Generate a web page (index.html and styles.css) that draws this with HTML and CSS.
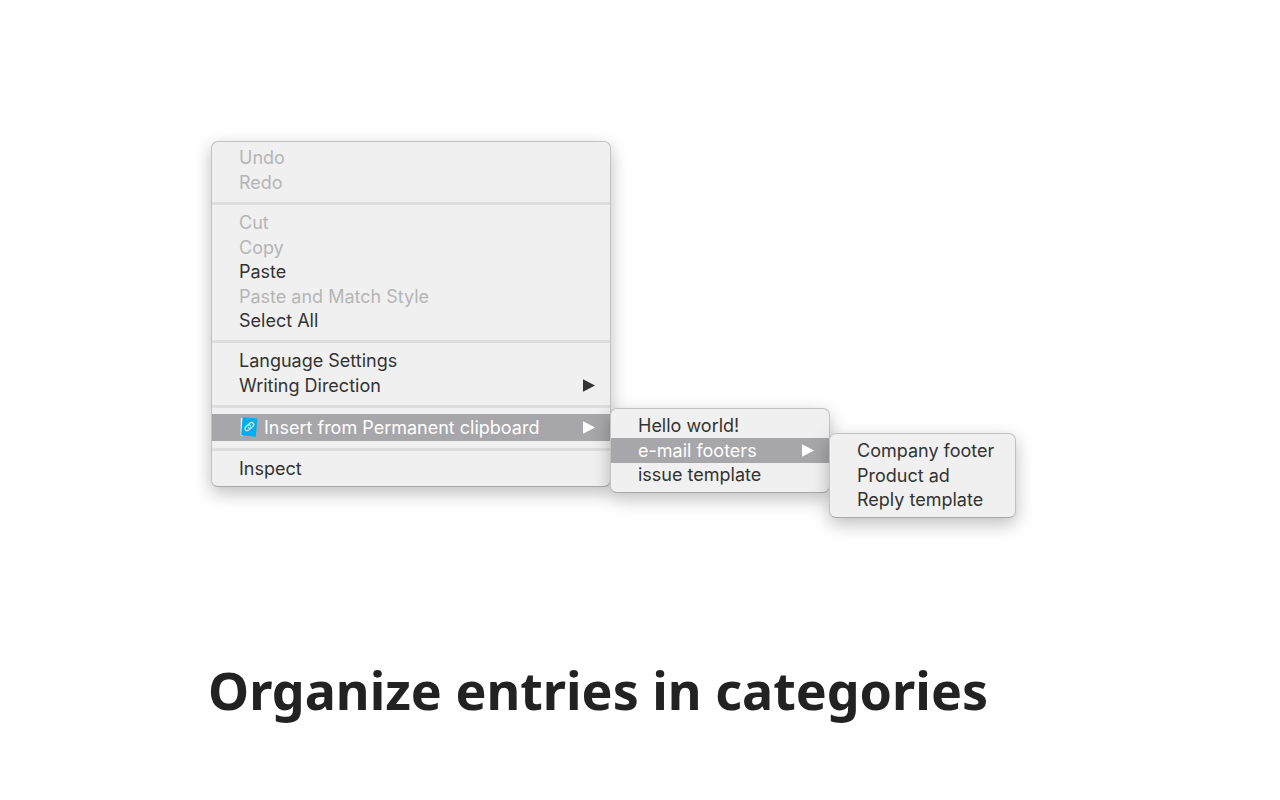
FILE: index.html
```
<!DOCTYPE html>
<html lang="en">
<head>
<meta charset="utf-8">
<title>Permanent clipboard</title>
<link rel="stylesheet" href="styles.css">
</head>
<body>
<main class="slide">
  <ul class="menu menu-main">
    <li>
      <ul class="group">
        <li class="row"><button class="item" disabled>Undo</button></li>
        <li class="row"><button class="item" disabled>Redo</button></li>
      </ul>
    </li>
    <li class="separator"></li>
    <li>
      <ul class="group">
        <li class="row"><button class="item" disabled>Cut</button></li>
        <li class="row"><button class="item" disabled>Copy</button></li>
        <li class="row"><button class="item">Paste</button></li>
        <li class="row"><button class="item" disabled>Paste and Match Style</button></li>
        <li class="row"><button class="item">Select All</button></li>
      </ul>
    </li>
    <li class="separator"></li>
    <li>
      <ul class="group">
        <li class="row"><button class="item">Language Settings</button></li>
        <li class="row"><button class="item">Writing Direction
          <svg class="arrow" viewBox="0 0 12 13" aria-hidden="true"><path d="M0 0.3 12 6.5 0 12.7z"/></svg></button></li>
      </ul>
    </li>
    <li class="separator"></li>
    <li class="row row-extension">
      <button class="item item-active">
        <svg class="book" viewBox="0 0 18 20" aria-hidden="true">
          <path d="M0.8 1.2 3 0.6 3 19.4 0.6 18.6z" fill="#e4eef2"/>
          <path d="M2.6 0.2 17.4 1.6 15.8 19.8 1.2 18.2z" fill="#00aeef"/>
          <g transform="rotate(-42 9.4 9.6)" fill="none" stroke="#c9edfb" stroke-width="1.3" stroke-linecap="round">
            <path d="M8.3 11.8H6.6a2.2 2.2 0 0 1 0-4.4h2.2a2.2 2.2 0 0 1 2 2.4"/>
            <path d="M10.5 7.4h1.7a2.2 2.2 0 0 1 0 4.4H10a2.2 2.2 0 0 1-2-2.4"/>
          </g>
        </svg>
        Insert from Permanent clipboard
        <svg class="arrow" viewBox="0 0 12 13" aria-hidden="true"><path d="M0 0.3 12 6.5 0 12.7z"/></svg>
      </button>
      <ul class="menu submenu submenu-entries">
        <li class="row"><button class="item">Hello world!</button></li>
        <li class="row">
          <button class="item item-active">e-mail footers
            <svg class="arrow" viewBox="0 0 12 13" aria-hidden="true"><path d="M0 0.3 12 6.5 0 12.7z"/></svg></button>
          <ul class="menu submenu submenu-footers">
            <li class="row"><button class="item">Company footer</button></li>
            <li class="row"><button class="item">Product ad</button></li>
            <li class="row"><button class="item">Reply template</button></li>
          </ul>
        </li>
        <li class="row"><button class="item">issue template</button></li>
      </ul>
    </li>
    <li class="separator"></li>
    <li class="row"><button class="item">Inspect</button></li>
  </ul>
  <h1 class="caption">Organize entries in categories</h1>
</main>
</body>
</html>
```
FILE: styles.css
```
* {
  box-sizing: border-box;
}

body {
  margin: 0;
  background: #fff;
  color: #333;
  font-family: Inter, "Liberation Sans", sans-serif;
}

.slide {
  display: flex;
  flex-direction: column;
  align-items: flex-start;
  gap: 168px;
  padding: 141px 0 72px 211px;
}

.menu,
.group {
  margin: 0;
  padding: 0;
  list-style: none;
}

.menu {
  padding: 5px 0;
  border: 1px solid #c2c2c2;
  border-bottom-color: #a8a8a8;
  border-radius: 7px;
  background: #f0f0f0;
  box-shadow: 0 6px 18px rgba(0, 0, 0, 0.26);
}

.menu-main {
  min-width: 400px;
  padding-top: 4px;
}

.row {
  position: relative;
  display: flex;
  height: 24px;
}

.row:nth-child(even) {
  height: 25px;
}

.row.row-extension {
  height: 27px;
}

.separator {
  height: 3px;
  margin: 7px 0 6px;
  background: #dedede;
}

.item {
  display: flex;
  flex: 1;
  align-items: center;
  padding: 0 15px 0 27px;
  border: 0;
  background: none;
  color: #333;
  font: inherit;
  font-size: 18px;
  line-height: 24px;
  white-space: nowrap;
}

.item:disabled {
  color: #b5b5b5;
}

.item-active {
  background: #a7a6ab;
  color: #fff;
}

.arrow {
  width: 12px;
  height: 13px;
  margin-left: auto;
  fill: currentColor;
}

.book {
  width: 18px;
  height: 20px;
  margin: 0 6px 2px 1px;
}

.submenu {
  position: absolute;
  top: -6px;
  left: 100%;
  z-index: 1;
}

.submenu-entries {
  min-width: 220px;
}

.submenu-footers {
  top: -5px;
  min-width: 187px;
}

.caption {
  margin: 0 0 0 -3px;
  color: #222;
  font-family: "Noto Sans", "Open Sans", sans-serif;
  font-size: 52px;
  font-weight: 700;
  line-height: 70px;
}
```
